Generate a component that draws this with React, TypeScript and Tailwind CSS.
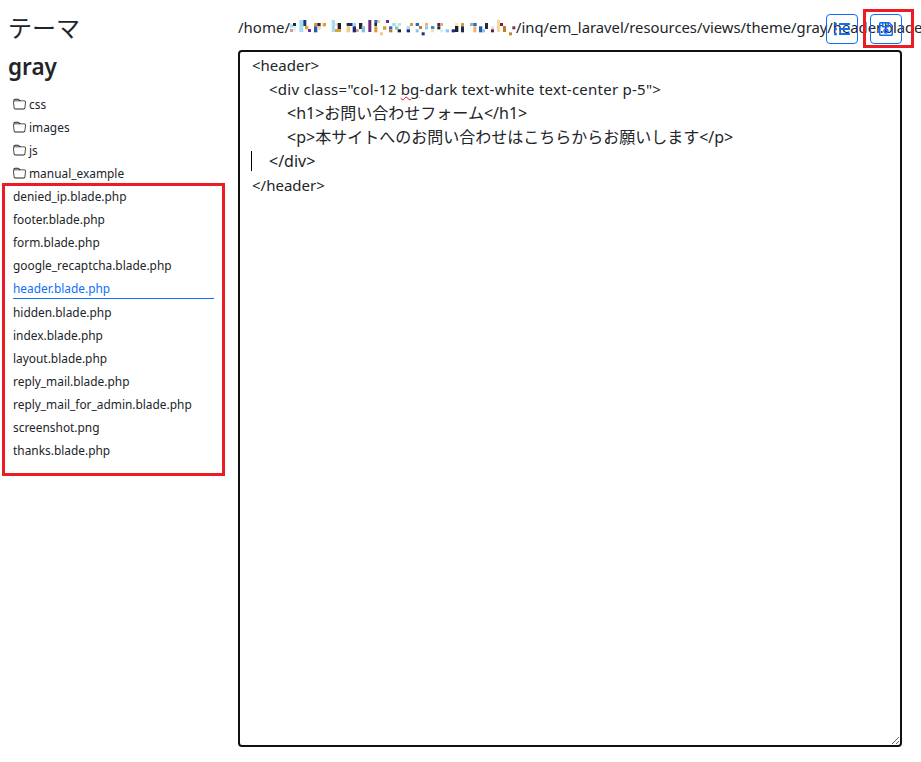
import { FaListUl, FaRegSave } from 'react-icons/fa';

const folders = ['css', 'images', 'js', 'manual_example'];
const files = [
  'denied_ip.blade.php',
  'footer.blade.php',
  'form.blade.php',
  'google_recaptcha.blade.php',
  'header.blade.php',
  'hidden.blade.php',
  'index.blade.php',
  'layout.blade.php',
  'reply_mail.blade.php',
  'reply_mail_for_admin.blade.php',
  'screenshot.png',
  'thanks.blade.php',
];

// blurred part of the path: x, y, w, h, colour
const mosaic: [number, number, number, number, string][] = [
  [15, 28, 9, 10, '#a8e0f0'], [15, 42, 9, 9, '#d89a9a'], [24, 24, 9, 9, '#1f2a44'], [24, 34, 9, 16, '#e0f4f8'],
  [43, 15, 12, 36, '#a8dcf5'], [55, 15, 9, 18, '#1a3a6e'], [60, 33, 10, 10, '#e8a040'], [69, 42, 9, 9, '#7a2a90'],
  [87, 24, 10, 10, '#d89a3a'], [97, 24, 10, 10, '#2a2a3a'], [87, 34, 10, 18, '#1f5fa8'], [97, 34, 10, 10, '#f0d8a0'],
  [113, 24, 10, 10, '#e0a030'], [140, 15, 10, 36, '#a8dcf5'], [150, 24, 10, 9, '#f5e8c0'], [158, 24, 10, 18, '#222222'],
  [150, 42, 18, 9, '#e0a040'], [185, 24, 18, 9, '#1f2a50'], [203, 24, 10, 9, '#a8dcf5'], [185, 34, 10, 18, '#f5c888'],
  [203, 34, 10, 18, '#1f2a7a'], [213, 42, 8, 9, '#d0a070'], [222, 24, 10, 18, '#222222'], [230, 34, 10, 18, '#7ac0f0'],
  [250, 15, 9, 36, '#6a2a7a'], [268, 15, 10, 9, '#2a6ab0'], [278, 15, 8, 9, '#f0d8a0'], [268, 24, 8, 9, '#1f2a44'],
  [268, 34, 9, 18, '#d89a3a'], [294, 34, 10, 10, '#d89a3a'], [303, 15, 9, 9, '#6a2a90'], [312, 34, 10, 9, '#2a6ab0'],
  [312, 43, 10, 9, '#c07a30'], [322, 24, 10, 9, '#a8e0d0'], [330, 34, 10, 10, '#88c0e0'], [338, 24, 10, 9, '#c0e8d0'],
  [338, 43, 10, 9, '#222222'], [285, 52, 9, 9, '#f5c888'],
  [365, 33, 10, 10, '#a8e0f0'], [375, 24, 9, 9, '#d89a3a'], [365, 43, 10, 9, '#1f2a7a'], [392, 24, 10, 9, '#2a6ab0'],
  [402, 33, 9, 9, '#c07a30'], [392, 43, 9, 9, '#88c0f0'], [410, 52, 9, 9, '#1f2a7a'], [420, 24, 9, 9, '#f0b070'],
  [420, 34, 9, 9, '#8ac8f0'], [438, 33, 10, 9, '#3a8ad0'], [438, 43, 9, 9, '#f5e0a0'], [457, 24, 9, 9, '#5a2040'],
  [465, 24, 9, 9, '#d0b080'], [457, 34, 9, 9, '#222222'], [465, 43, 9, 9, '#d0f0f8'], [482, 43, 10, 9, '#8ac8f0'],
  [500, 43, 10, 9, '#1f2a7a'], [510, 24, 10, 9, '#f5e8c0'], [510, 33, 10, 18, '#222222'], [528, 24, 9, 9, '#d89a3a'],
  [528, 34, 9, 18, '#1f2a50'], [555, 24, 10, 9, '#a0b0a0'], [565, 24, 10, 9, '#2a6ab0'], [565, 34, 9, 18, '#f0b070'],
  [582, 34, 10, 18, '#1f5fa8'], [592, 43, 8, 9, '#88c0e0'], [600, 24, 9, 18, '#2a2a3a'], [618, 34, 10, 9, '#e0e0e0'],
  [618, 43, 9, 9, '#6a2030'], [636, 15, 9, 36, '#f5d8a0'], [645, 24, 9, 9, '#7a2030'], [654, 33, 9, 18, '#c07a30'],
  [682, 34, 9, 9, '#8a2a6a'], [672, 52, 9, 9, '#c88a30'],
];

export default function App() {
  return (
    <div className="relative flex h-[762px] w-[921px] overflow-hidden bg-white font-['Noto_Sans','Noto_Sans_CJK_JP',sans-serif] text-[#212529]">
      <aside className="w-[238px] shrink-0 pl-2 pt-[10px]">
        <h1 className="text-[24px] leading-[36px]">テーマ</h1>
        <h2 className="mt-[3px] text-[22.5px] font-semibold leading-[36px]">gray</h2>
        <ul className="mt-[8px] pl-[5px] text-[11.9px] leading-[23px]">
          {folders.map((name) => (
            <li key={name} className="flex items-center gap-[3px]">
              <svg width="13" height="13" viewBox="0 0 16 16" fill="currentColor" className="shrink-0">
                <path d="M.54 3.87.5 3a2 2 0 0 1 2-2h3.672a2 2 0 0 1 1.414.586l.828.828A2 2 0 0 0 9.828 3h3.982a2 2 0 0 1 1.992 2.181l-.637 7A2 2 0 0 1 13.174 14H2.826a2 2 0 0 1-1.991-1.819l-.637-7a1.99 1.99 0 0 1 .342-1.31zM2.19 4a1 1 0 0 0-.996 1.09l.637 7a1 1 0 0 0 .995.91h10.348a1 1 0 0 0 .995-.91l.637-7A1 1 0 0 0 13.81 4H2.19zm4.69-1.707A1 1 0 0 0 6.172 2H2.5a1 1 0 0 0-1 .981l.006.139C1.72 3.042 1.95 3 2.19 3h5.396l-.707-.707z" />
              </svg>
              {name}
            </li>
          ))}
          {files.map((name) =>
            name === 'header.blade.php' ? (
              <li key={name} className="mb-[2px] mr-[24px] border-b border-[#0d6efd] pt-[1px] leading-[20px] text-[#0d6efd]">
                {name}
              </li>
            ) : (
              <li key={name}>{name}</li>
            ),
          )}
        </ul>
      </aside>
      <main className="min-w-0 flex-1 pt-[14px]">
        <div className="relative h-[36px]">
          <div className="flex whitespace-nowrap text-[15px] leading-[26px]">
            <span className="shrink-0">/home/</span>
            <svg width="226" height="24" viewBox="15 0 678 72" className="mt-[1px] shrink-0">
              {mosaic.map(([x, y, w, h, c], i) => (
                <rect key={i} x={x} y={y} width={w} height={h} fill={c} />
              ))}
            </svg>
            <span className="shrink-0 text-[14.8px]">/inq/em_laravel/resources/views/theme/gray/header.blade.php</span>
          </div>
          <button className="absolute left-[588px] top-0 flex h-[30px] w-[32px] items-center justify-center rounded-[4px] border border-[#0d6efd] text-[16px] text-[#0d6efd]">
            <FaListUl />
          </button>
          <button className="absolute left-[632px] top-0 flex h-[30px] w-[32px] items-center justify-center rounded-[4px] border border-[#0d6efd] text-[16px] text-[#0d6efd]">
            <FaRegSave />
          </button>
        </div>
        <div className="h-[697px] w-[664px] resize overflow-auto rounded-[4px] border-2 border-[#111] px-[12px] py-[1px] text-[16px] leading-[24px]">
          <div className="h-[24px] text-[15px]">&lt;header&gt;</div>
          <div className="ml-[17px] h-[24px] text-[15px] tracking-[0.25px]">
            &lt;div class="col-12 <span className="underline decoration-[#e81123] decoration-wavy decoration-1">bg</span>-dark text-white text-center p-5"&gt;
          </div>
          <div className="ml-[35px] h-[24px] leading-[22px]">
            &lt;h1&gt;<span className="font-['Noto_Sans_CJK_JP',sans-serif]">お問い合わせフォーム</span>&lt;/h1&gt;
          </div>
          <div className="ml-[35px] h-[24px] leading-[22px]">
            &lt;p&gt;<span className="font-['Noto_Sans_CJK_JP',sans-serif]">本サイトへのお問い合わせはこちらからお願いします</span>&lt;/p&gt;
          </div>
          <div className="relative h-[24px] pl-[17px]">
            <span className="absolute left-[-1px] top-[2px] h-[20px] w-px bg-black" />
            &lt;/div&gt;
          </div>
          <div className="h-[24px] text-[15px]">&lt;/header&gt;</div>
        </div>
      </main>
      <div className="pointer-events-none absolute left-[2px] top-[183px] h-[293px] w-[223px] border-[3px] border-[#ed1c24]" />
      <div className="pointer-events-none absolute left-[863px] top-[9px] h-[39px] w-[51px] border-[3px] border-[#ed1c24]" />
    </div>
  );
}
